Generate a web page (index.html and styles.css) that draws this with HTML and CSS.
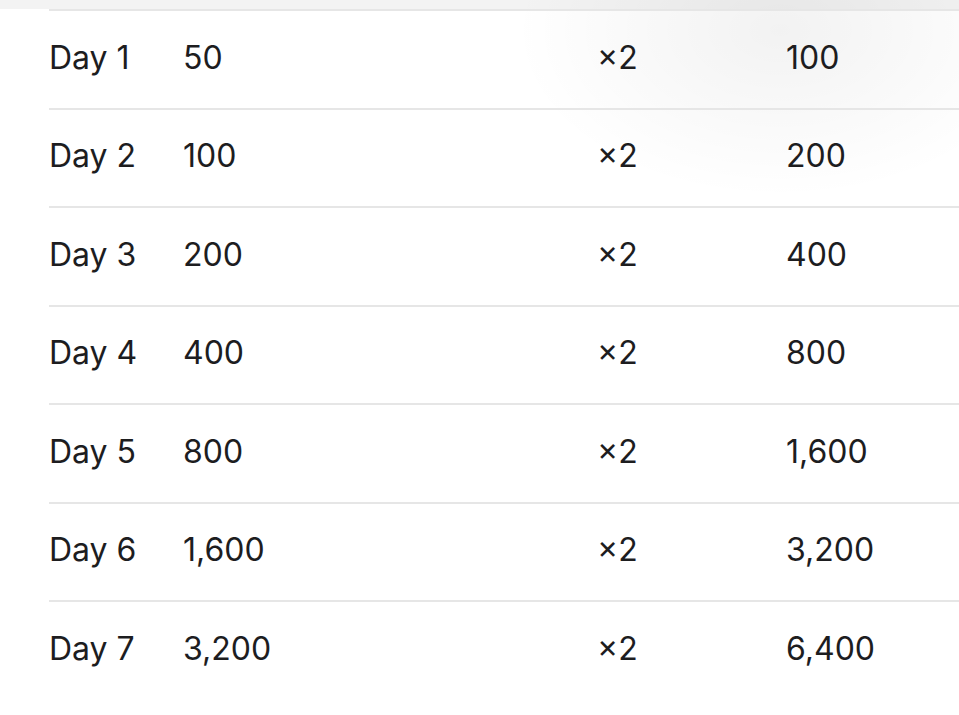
FILE: index.html
```html
<!DOCTYPE html>
<html>
<head>
<meta charset="utf-8">
<link rel="stylesheet" href="styles.css">
</head>
<body>
<div class="page">
  <div class="table">
    <div class="row"><span class="day">Day 1</span><span class="val">50</span><span class="mul">×2</span><span class="res">100</span></div>
    <div class="row"><span class="day">Day 2</span><span class="val">100</span><span class="mul">×2</span><span class="res">200</span></div>
    <div class="row"><span class="day">Day 3</span><span class="val">200</span><span class="mul">×2</span><span class="res">400</span></div>
    <div class="row"><span class="day">Day 4</span><span class="val">400</span><span class="mul">×2</span><span class="res">800</span></div>
    <div class="row"><span class="day">Day 5</span><span class="val">800</span><span class="mul">×2</span><span class="res">1,600</span></div>
    <div class="row"><span class="day">Day 6</span><span class="val">1,600</span><span class="mul">×2</span><span class="res">3,200</span></div>
    <div class="row"><span class="day">Day 7</span><span class="val">3,200</span><span class="mul">×2</span><span class="res">6,400</span></div>
  </div>
</div>
</body>
</html>
```
FILE: styles.css
```css
html, body {
  margin: 0;
  padding: 0;
  width: 959px;
  height: 715px;
  overflow: hidden;
  background: #ffffff;
}
.page {
  height: 715px;
  padding-top: 9px;
  padding-left: 49px;
  box-sizing: border-box;
  background:
    radial-gradient(ellipse 380px 240px at 780px 30px, rgba(0,0,0,0.05), rgba(0,0,0,0) 70%),
    linear-gradient(#f3f3f3 0, #f3f3f3 9px, #ffffff 9px);
  font-family: Inter, "Liberation Sans", sans-serif;
  color: #1d1d1f;
}
.table {
  display: flex;
  flex-direction: column;
}
.row {
  display: grid;
  grid-template-columns: 134px 414px 189px 1fr;
  align-items: center;
  height: 98.5px;
  border-top: 2px solid #e6e6e6;
  box-sizing: border-box;
  font-size: 32px;
  letter-spacing: 0;
  padding-bottom: 4px;
}
```
